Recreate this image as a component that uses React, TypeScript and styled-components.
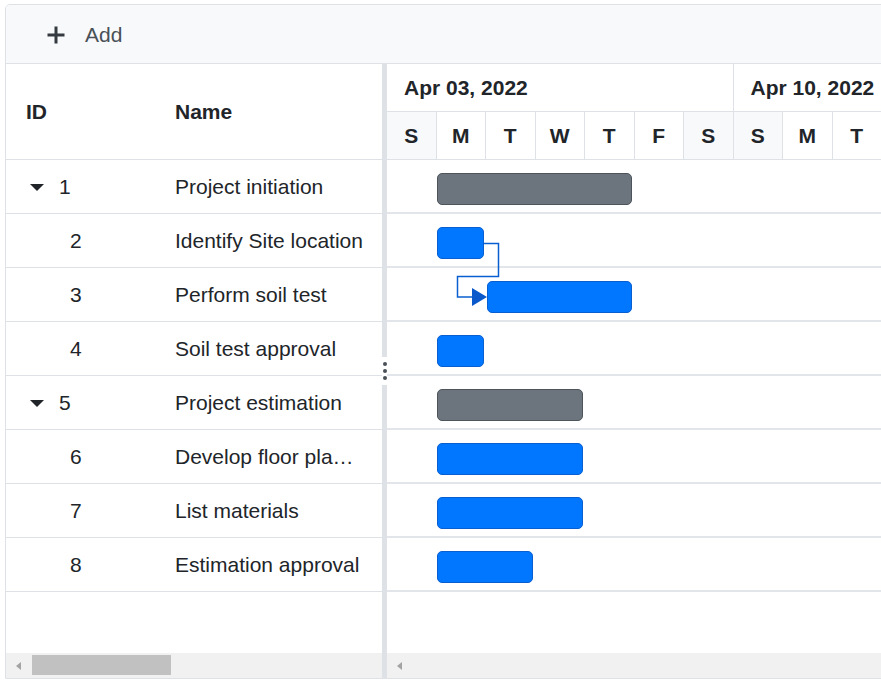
import styled, { createGlobalStyle } from "styled-components";

const DAY = 49.5;

const GlobalStyle = createGlobalStyle`
  html, body {
    margin: 0;
    overflow: hidden;
    background: #fff;
  }
  * {
    box-sizing: border-box;
  }
  body {
    font-family: "Liberation Sans", Arial, sans-serif;
    color: #212529;
  }
`;

type Task = {
  id: number;
  name: string;
  parent?: boolean;
  start: number;
  days: number;
};

const tasks: Task[] = [
  { id: 1, name: "Project initiation", parent: true, start: 1, days: 4 },
  { id: 2, name: "Identify Site location", start: 1, days: 1 },
  { id: 3, name: "Perform soil test", start: 2, days: 3 },
  { id: 4, name: "Soil test approval", start: 1, days: 1 },
  { id: 5, name: "Project estimation", parent: true, start: 1, days: 3 },
  { id: 6, name: "Develop floor plan for estimation", start: 1, days: 3 },
  { id: 7, name: "List materials", start: 1, days: 3 },
  { id: 8, name: "Estimation approval", start: 1, days: 2 },
];

const weeks = ["Apr 03, 2022", "Apr 10, 2022", "Apr 17, 2022"];
const dayLetters = ["S", "M", "T", "W", "T", "F", "S"];

const Frame = styled.div`
  margin: 4px 0 0 5px;
  width: 900px;
  height: 675px;
  border: 1px solid #dee2e6;
  border-top-left-radius: 5px;
  display: flex;
  flex-direction: column;
  overflow: hidden;
`;

const Toolbar = styled.div`
  height: 59px;
  flex-shrink: 0;
  background: #f8f9fa;
  border-bottom: 1px solid #dee2e6;
  display: flex;
  align-items: center;
  padding-left: 40px;
`;

const ToolButton = styled.div`
  display: flex;
  align-items: center;
  gap: 19px;
  font-size: 21px;
  color: #495057;
  padding-top: 2px;

  svg {
    color: #343a40;
  }
`;

const Body = styled.div`
  flex: 1;
  min-height: 0;
  display: flex;
`;

const GridPane = styled.div`
  width: 376px;
  flex-shrink: 0;
  display: flex;
  flex-direction: column;
`;

const GridHeader = styled.div`
  height: 96px;
  flex-shrink: 0;
  border-bottom: 1px solid #dee2e6;
  display: flex;
  align-items: center;
  font-size: 21px;
  font-weight: bold;
`;

const HeaderCell = styled.div<{ $width?: number }>`
  ${({ $width }) => ($width ? `width: ${$width}px;` : "flex: 1;")}
  padding-left: 20px;
`;

const GridBody = styled.div`
  flex: 1;
`;

const GridRow = styled.div`
  height: 54px;
  border-bottom: 1px solid #dee2e6;
  display: flex;
  align-items: center;
  font-size: 21px;
`;

const IdCell = styled.div<{ $child?: boolean }>`
  width: 149px;
  flex-shrink: 0;
  display: flex;
  align-items: center;
  padding-left: ${({ $child }) => ($child ? "64px" : "24px")};
`;

const Caret = styled.span`
  width: 0;
  height: 0;
  border-left: 7.5px solid transparent;
  border-right: 7.5px solid transparent;
  border-top: 7px solid #212529;
  margin-right: 15px;
  margin-top: 2px;
`;

const NameCell = styled.div`
  flex: 1;
  min-width: 0;
  padding: 0 18px 0 20px;
  white-space: nowrap;
  overflow: hidden;
  text-overflow: ellipsis;
`;

const Splitter = styled.div`
  width: 5px;
  flex-shrink: 0;
  background: #dee2e6;
  position: relative;
`;

const Grip = styled.div`
  position: absolute;
  top: 293px;
  left: 0;
  width: 5px;
  height: 28px;
  background: #fff;
  display: flex;
  flex-direction: column;
  align-items: center;
  justify-content: center;
  gap: 3px;

  span {
    width: 4px;
    height: 4px;
    border-radius: 50%;
    background: #495057;
  }
`;

const ChartPane = styled.div`
  flex: 1;
  min-width: 0;
  overflow: hidden;
  display: flex;
  flex-direction: column;
`;

const TimelineHeader = styled.div`
  height: 96px;
  flex-shrink: 0;
  border-bottom: 1px solid #dee2e6;
  display: flex;
  flex-direction: column;
  font-size: 21px;
  font-weight: bold;
`;

const WeekRow = styled.div`
  height: 48px;
  display: flex;
  border-bottom: 1px solid #dee2e6;
`;

const WeekCell = styled.div`
  width: ${DAY * 7}px;
  flex-shrink: 0;
  border-right: 1px solid #dee2e6;
  padding-left: 17px;
  display: flex;
  align-items: center;
  white-space: nowrap;
`;

const DayRow = styled.div`
  flex: 1;
  display: flex;
`;

const DayCell = styled.div<{ $weekend?: boolean }>`
  width: ${DAY}px;
  flex-shrink: 0;
  border-right: 1px solid #dee2e6;
  background: ${({ $weekend }) => ($weekend ? "#f8f9fa" : "#fff")};
  display: flex;
  align-items: center;
  justify-content: center;
`;

const ChartBody = styled.div`
  flex: 1;
  position: relative;
`;

const ChartRow = styled.div`
  height: 54px;
  border-bottom: 2px solid #e2e5e9;
  display: flex;
  align-items: flex-start;
  padding-top: 13px;
`;

const Bar = styled.div<{ $start: number; $days: number; $summary?: boolean }>`
  margin-left: ${({ $start }) => $start * DAY + 0.5}px;
  width: ${({ $days }) => $days * DAY - 3}px;
  height: 32px;
  border-radius: 5px;
  background: ${({ $summary }) => ($summary ? "#6c757d" : "#0077fe")};
  border: 1px solid ${({ $summary }) => ($summary ? "#4d545b" : "#0a5fd0")};
`;

const Connector = styled.svg`
  position: absolute;
  left: 0;
  top: 0;
  overflow: visible;
  pointer-events: none;
`;

const ScrollBar = styled.div`
  height: 25px;
  flex-shrink: 0;
  background: #f1f1f1;
  position: relative;
  display: flex;
  align-items: center;
  padding-left: 10px;
`;

const ScrollArrow = styled.span`
  width: 0;
  height: 0;
  border-top: 4.5px solid transparent;
  border-bottom: 4.5px solid transparent;
  border-right: 5px solid #a3a3a3;
`;

const ScrollThumb = styled.div`
  position: absolute;
  left: 26px;
  top: 2px;
  width: 139px;
  height: 20px;
  background: #c1c1c1;
`;

const PlusIcon = () => (
  <svg width="20" height="20" viewBox="0 0 20 20">
    <path d="M10 1.5V18.5M1.5 10H18.5" stroke="currentColor" strokeWidth="3" fill="none" />
  </svg>
);

export default function App() {
  return (
    <>
      <GlobalStyle />
      <Frame>
        <Toolbar>
          <ToolButton>
            <PlusIcon />
            <span>Add</span>
          </ToolButton>
        </Toolbar>

        <Body>
          <GridPane>
            <GridHeader>
              <HeaderCell $width={149}>ID</HeaderCell>
              <HeaderCell>Name</HeaderCell>
            </GridHeader>
            <GridBody>
              {tasks.map((t) => (
                <GridRow key={t.id}>
                  <IdCell $child={!t.parent}>
                    {t.parent && <Caret />}
                    {t.id}
                  </IdCell>
                  <NameCell>{t.name}</NameCell>
                </GridRow>
              ))}
            </GridBody>
            <ScrollBar>
              <ScrollArrow />
              <ScrollThumb />
            </ScrollBar>
          </GridPane>

          <Splitter>
            <Grip>
              <span />
              <span />
              <span />
            </Grip>
          </Splitter>

          <ChartPane>
            <TimelineHeader>
              <WeekRow>
                {weeks.map((w) => (
                  <WeekCell key={w}>{w}</WeekCell>
                ))}
              </WeekRow>
              <DayRow>
                {weeks.flatMap((w) =>
                  dayLetters.map((d, i) => (
                    <DayCell key={w + i} $weekend={i === 0 || i === 6}>
                      {d}
                    </DayCell>
                  ))
                )}
              </DayRow>
            </TimelineHeader>
            <ChartBody>
              {tasks.map((t) => (
                <ChartRow key={t.id}>
                  <Bar $start={t.start} $days={t.days} $summary={t.parent} />
                </ChartRow>
              ))}
              <Connector width="120" height="160">
                <path
                  d="M97 83.5H111.5V116.5H70.5V137H86"
                  stroke="#0a5fd0"
                  strokeWidth="1.5"
                  fill="none"
                />
                <polygon points="85,128 100,137 85,146" fill="#0a58ca" />
              </Connector>
            </ChartBody>
            <ScrollBar>
              <ScrollArrow />
            </ScrollBar>
          </ChartPane>
        </Body>
      </Frame>
    </>
  );
}
